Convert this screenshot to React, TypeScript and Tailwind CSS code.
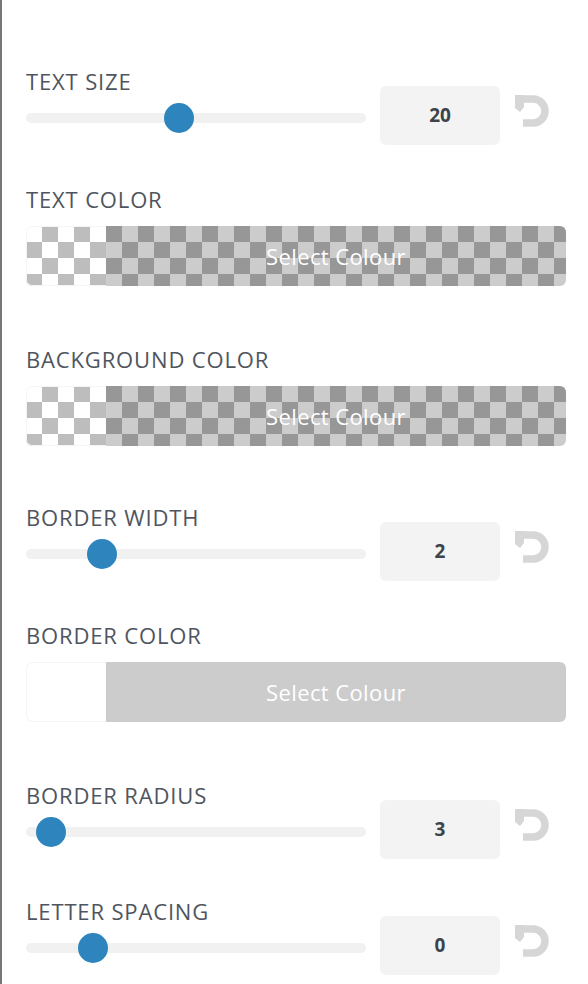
import React from "react";

const font = { fontFamily: '"Open Sans", "Noto Sans", Arial, sans-serif' };

function ResetIcon() {
  return (
    <svg width="34" height="33" viewBox="0 0 34 33" fill="none">
      <path
        d="M6 4 H18 A12 12 0 0 1 18 28 H8"
        stroke="#d6d6d6"
        strokeWidth="7.5"
        strokeLinecap="butt"
      />
      <polygon points="0,0 9,0 9,12 5,17 0,13" fill="#d6d6d6" />
    </svg>
  );
}

function Label({ children }: { children: React.ReactNode }) {
  return (
    <div className="h-[24px] text-[22px] font-medium leading-[28px] tracking-[0.85px] text-[#4f555e] uppercase">
      {children}
    </div>
  );
}

function SliderControl({
  label,
  value,
  thumb,
  className,
}: {
  label: string;
  value: string;
  thumb: number;
  className?: string;
}) {
  return (
    <div className={className}>
      <Label>{label}</Label>
      <div className="-mt-[5px] flex items-start">
        <div className="flex h-[59px] w-[340px] items-center pt-[5px]">
          <div className="relative h-[10px] w-full rounded-full bg-[#f1f1f1]">
            <div
              className="absolute top-1/2 h-[30px] w-[30px] -translate-y-1/2 rounded-full bg-[#2e85bd]"
              style={{ left: thumb }}
            />
          </div>
        </div>
        <div className="ml-[14px] flex h-[59px] w-[120px] items-center justify-center rounded-[6px] bg-[#f3f3f3] text-[19px] font-bold text-[#3c434a]">
          {value}
        </div>
        <div className="ml-[15px] mt-[9px]">
          <ResetIcon />
        </div>
      </div>
    </div>
  );
}

function ColourControl({
  label,
  transparent,
  className,
}: {
  label: string;
  transparent: boolean;
  className?: string;
}) {
  return (
    <div className={className}>
      <Label>{label}</Label>
      <div
        className={
          transparent
            ? "mt-[17px] flex h-[60px] w-[540px] overflow-hidden rounded-[6px] bg-[conic-gradient(#bdbdbd_25%,#ffffff_0_50%,#bdbdbd_0_75%,#ffffff_0)] bg-[length:32px_32px]"
            : "mt-[17px] flex h-[60px] w-[540px] overflow-hidden rounded-[6px] bg-white"
        }
      >
        <div className="h-full w-[80px] rounded-l-[6px] border border-r-0 border-[#f4f4f4]" />
        <button className="flex h-full flex-1 items-center justify-center bg-black/20 text-[22px] tracking-[0.4px] text-white">
          Select Colour
        </button>
      </div>
    </div>
  );
}

export default function App() {
  return (
    <div
      className="min-h-[984px] w-[588px] border-l-2 border-[#777777] bg-white pl-6 pt-[67px]"
      style={font}
    >
      <SliderControl label="Text Size" value="20" thumb={138} />
      <ColourControl label="Text Color" transparent className="mt-[40px]" />
      <ColourControl label="Background Color" transparent className="mt-[59px]" />
      <SliderControl label="Border Width" value="2" thumb={61} className="mt-[57px]" />
      <ColourControl label="Border Color" transparent={false} className="mt-[40px]" />
      <SliderControl label="Border Radius" value="3" thumb={10} className="mt-[59px]" />
      <SliderControl label="Letter Spacing" value="0" thumb={52} className="mt-[38px]" />
    </div>
  );
}
